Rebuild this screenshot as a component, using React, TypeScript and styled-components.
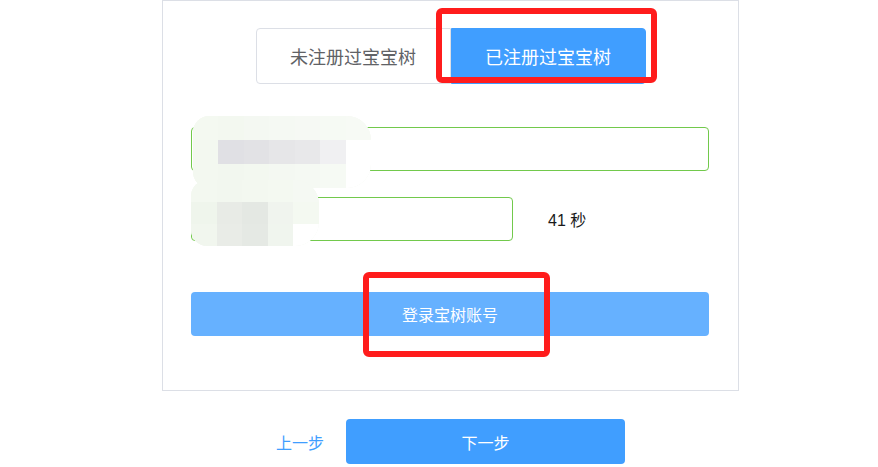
import React, { useState } from "react";
import styled, { createGlobalStyle } from "styled-components";

const GlobalStyle = createGlobalStyle`
  html, body {
    margin: 0;
    padding: 0;
    background: #ffffff;
    font-family: "Noto Sans CJK SC", "Noto Sans", sans-serif;
  }
`;

const mosaicTop = [
  ["#f4f9f1", "#f3f8f0", "#f4f8f2", "#f5f9f3", "#f6f9f4", "#f6faf4", "#f7faf5"],
  ["#f3f8f0", "#e0e0e4", "#e2e2e5", "#e6e6e8", "#e8e8ea", "#f0f0f2", "#ffffff"],
  ["#f3f8f0", "#f2f7ef", "#f3f8f0", "#f4f8f2", "#f5f9f3", "#f6faf4", "#ffffff"],
];

const mosaicBottom = [
  ["#f3f8f0", "#f2f7ef", "#f3f8f0", "#f4f9f1", "#f5f9f3"],
  ["#eff5ec", "#e8ebe6", "#e4e8e3", "#f0f4ee", "#f4f9f1"],
  ["#f1f6ee", "#e9ece7", "#e5e9e4", "#f0f5ee", "#ffffff"],
];

export default function App() {
  const [registered, setRegistered] = useState(true);

  return (
    <Page>
      <GlobalStyle />
      <Card>
        <Tabs>
          <Tab $active={!registered} $side="left" onClick={() => setRegistered(false)}>
            未注册过宝宝树
          </Tab>
          <Tab $active={registered} $side="right" onClick={() => setRegistered(true)}>
            已注册过宝宝树
          </Tab>
          <Highlight style={{ left: 245, top: -20, width: 221, height: 75 }} />
        </Tabs>

        <Form>
          <FieldRow>
            <Input $wide />
            <Mosaic $cols={7} style={{ left: 2, top: -11, width: 178, height: 72 }}>
              {mosaicTop.flat().map((c, i) => (
                <Cell key={i} style={{ background: c }} />
              ))}
            </Mosaic>
          </FieldRow>

          <FieldRow>
            <Input />
            <Countdown>41 秒</Countdown>
            <Mosaic $cols={5} style={{ left: 0, top: -17, width: 128, height: 66 }}>
              {mosaicBottom.flat().map((c, i) => (
                <Cell key={i} style={{ background: c }} />
              ))}
            </Mosaic>
          </FieldRow>

          <LoginWrap>
            <LoginButton>登录宝树账号</LoginButton>
            <Highlight style={{ left: 172, top: -20, width: 187, height: 85 }} />
          </LoginWrap>
        </Form>
      </Card>

      <Footer>
        <PrevLink>上一步</PrevLink>
        <NextButton>下一步</NextButton>
      </Footer>
    </Page>
  );
}

const Page = styled.div`
  width: 878px;
  height: 467px;
  overflow: hidden;
  padding-left: 162px;
  box-sizing: border-box;
`;

const Card = styled.div`
  width: 577px;
  height: 391px;
  box-sizing: border-box;
  border: 1px solid #dcdfe6;
  padding: 27px 28px 0 28px;
`;

const Tabs = styled.div`
  position: relative;
  display: flex;
  justify-content: center;
`;

const Tab = styled.div<{ $active: boolean; $side: "left" | "right" }>`
  width: 195px;
  height: 56px;
  box-sizing: border-box;
  display: flex;
  align-items: center;
  justify-content: center;
  font-size: 18px;
  cursor: pointer;
  color: ${(p) => (p.$active ? "#ffffff" : "#606266")};
  background: ${(p) => (p.$active ? "#409eff" : "#ffffff")};
  border: 1px solid ${(p) => (p.$active ? "#409eff" : "#dcdfe6")};
  border-radius: ${(p) => (p.$side === "left" ? "4px 0 0 4px" : "0 4px 4px 0")};
`;

const Highlight = styled.div`
  position: absolute;
  box-sizing: border-box;
  border: 6px solid #ff1c1c;
  border-radius: 6px;
  pointer-events: none;
`;

const Form = styled.div`
  display: flex;
  flex-direction: column;
  padding-top: 43px;
`;

const FieldRow = styled.div`
  position: relative;
  display: flex;
  align-items: center;
  margin-bottom: 26px;
`;

const Input = styled.input<{ $wide?: boolean }>`
  width: ${(p) => (p.$wide ? "518px" : "322px")};
  height: 44px;
  box-sizing: border-box;
  border: 1px solid #72c94c;
  border-radius: 4px;
  outline: none;
  padding: 0 14px;
  font-size: 15px;
`;

const Countdown = styled.span`
  margin-left: 35px;
  font-size: 16px;
  color: #1a1a1a;
  font-family: "Liberation Sans", "Noto Sans CJK SC", sans-serif;
`;

const Mosaic = styled.div<{ $cols: number }>`
  position: absolute;
  display: grid;
  grid-template-columns: repeat(${(p) => p.$cols}, 1fr);
  border-radius: 16px 24px 24px 16px;
  overflow: hidden;
  background: #f3f8f0;
  pointer-events: none;
`;

const Cell = styled.div``;

const LoginWrap = styled.div`
  position: relative;
  margin-top: 25px;
`;

const LoginButton = styled.button`
  width: 518px;
  height: 44px;
  border: none;
  border-radius: 4px;
  background: #66b1ff;
  color: #ffffff;
  font-size: 16px;
  font-family: "Noto Sans CJK SC", sans-serif;
  cursor: pointer;
`;

const Footer = styled.div`
  display: flex;
  align-items: center;
  padding: 28px 0 0 114px;
`;

const PrevLink = styled.a`
  color: #409eff;
  font-size: 16px;
  cursor: pointer;
  margin-right: 22px;
`;

const NextButton = styled.button`
  width: 279px;
  height: 45px;
  border: none;
  border-radius: 4px;
  background: #409eff;
  color: #ffffff;
  font-size: 16px;
  font-family: "Noto Sans CJK SC", sans-serif;
  cursor: pointer;
`;
